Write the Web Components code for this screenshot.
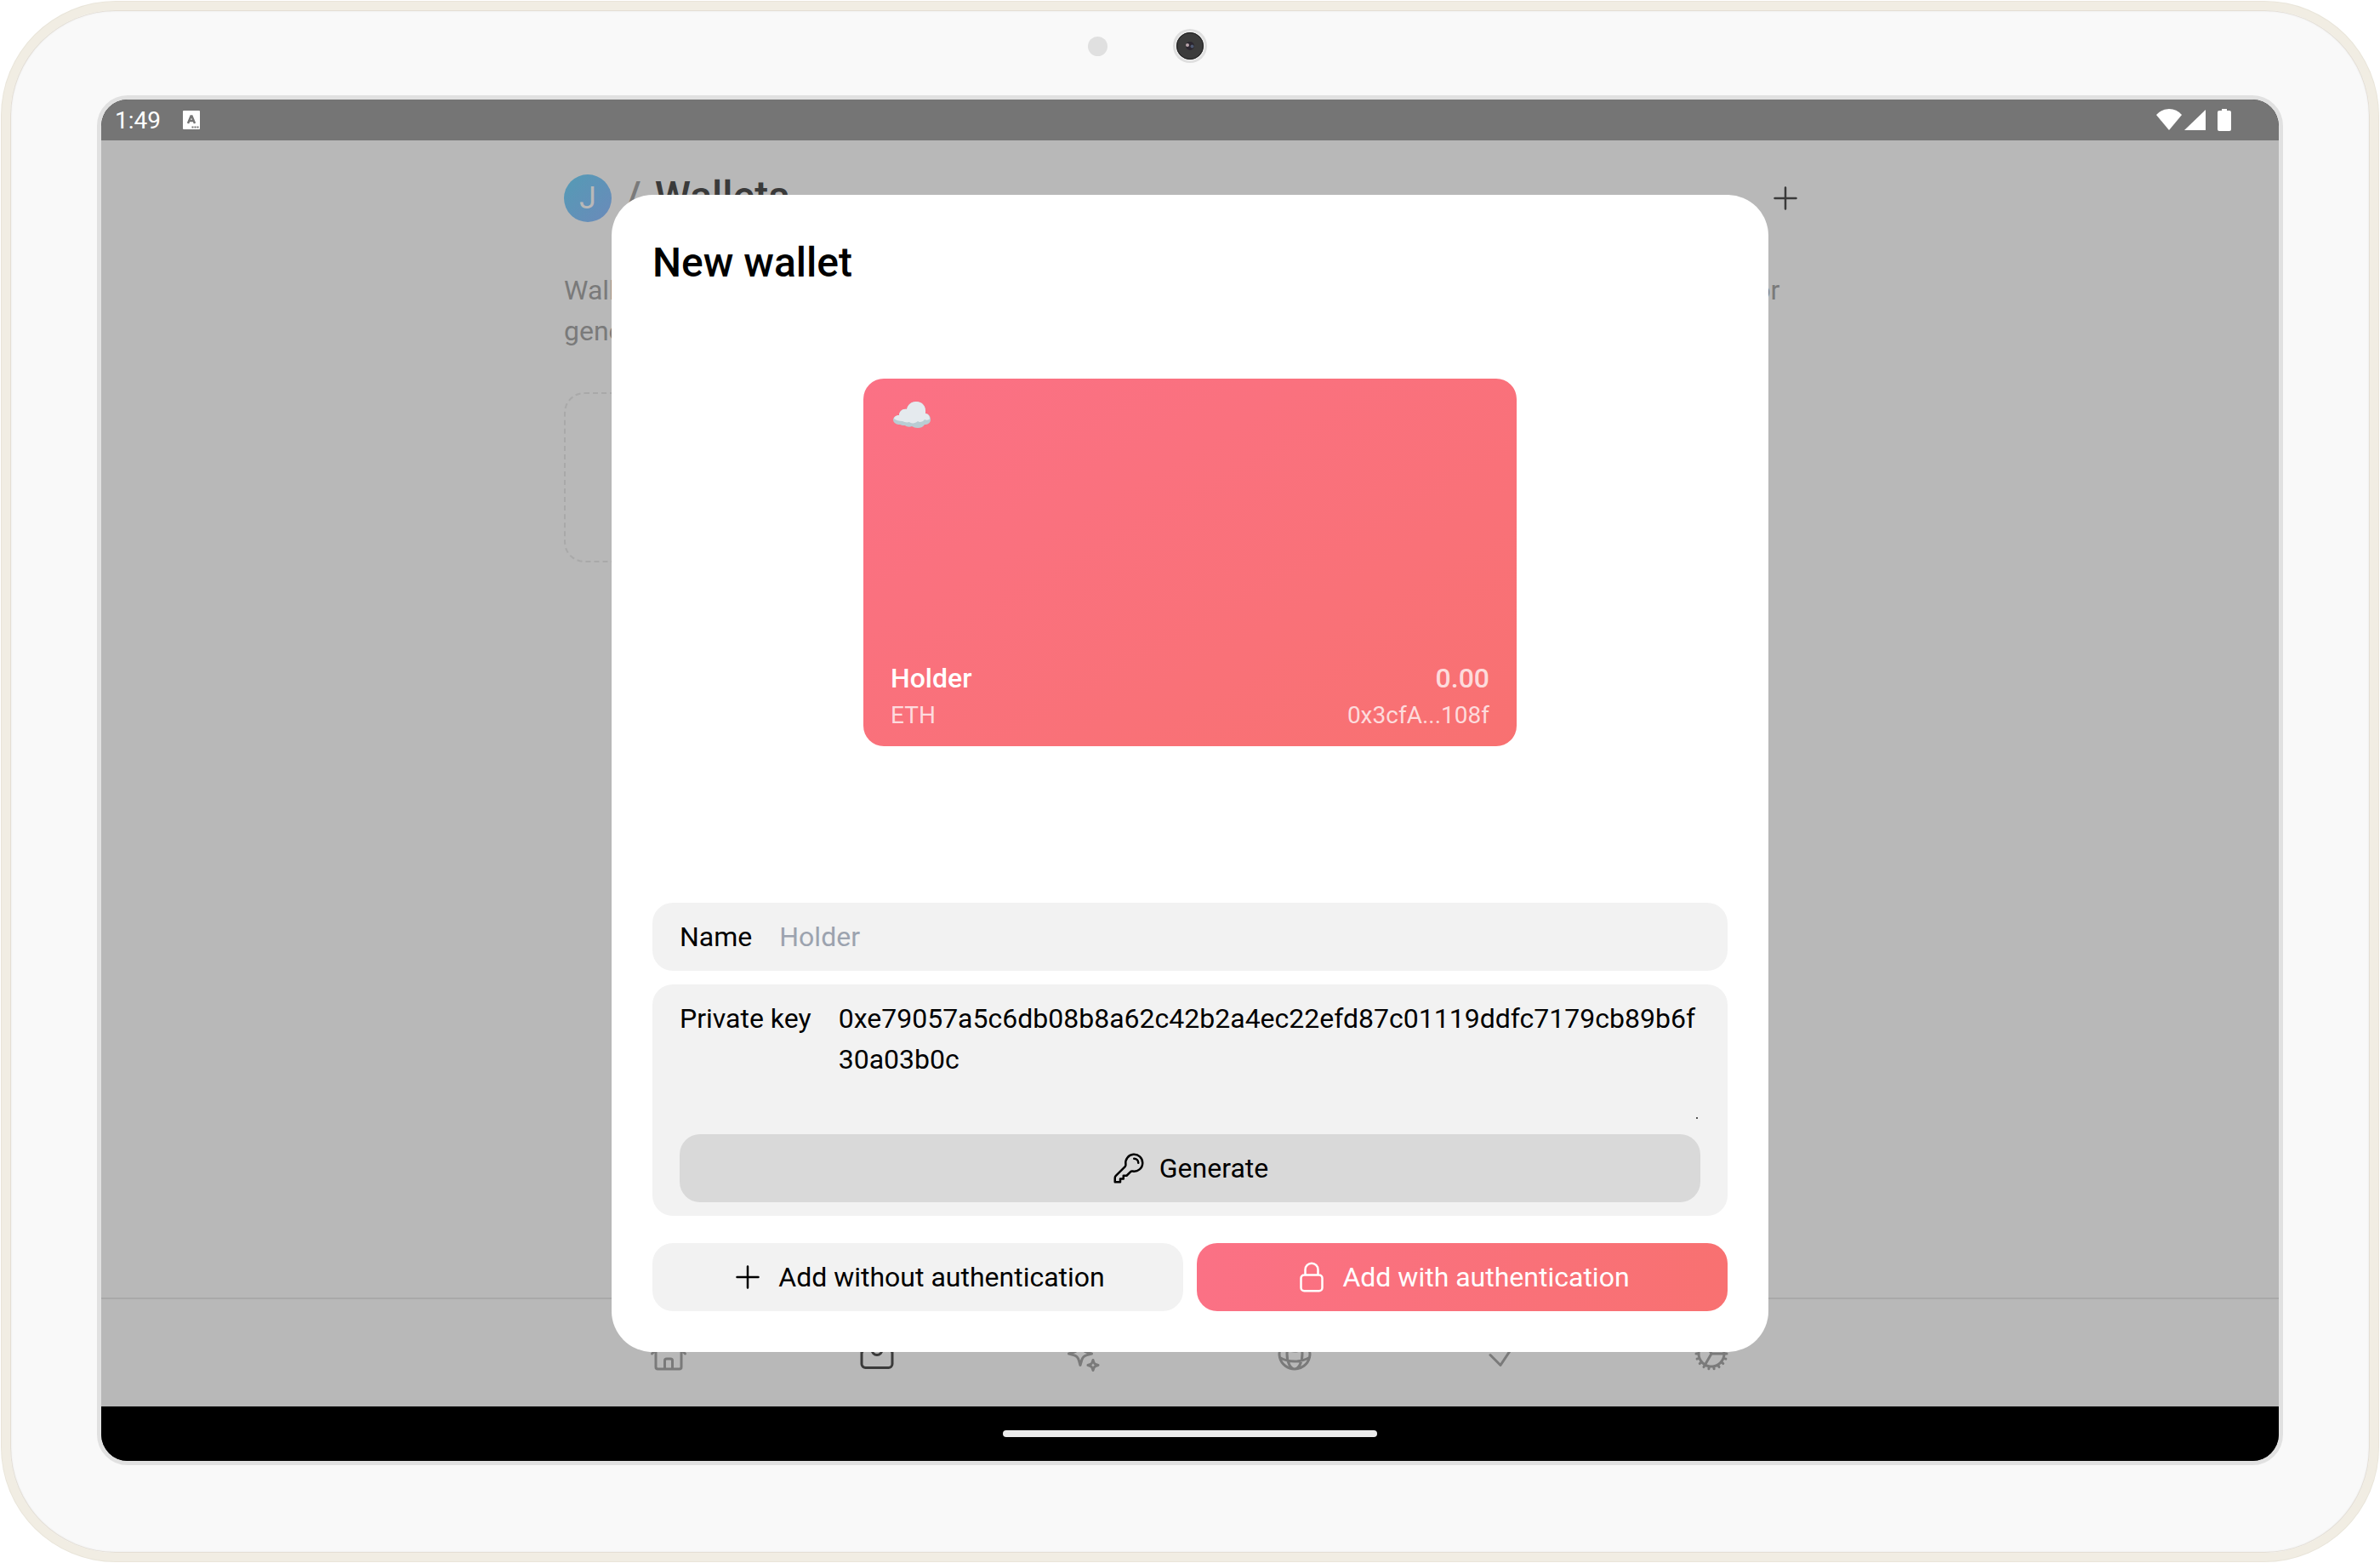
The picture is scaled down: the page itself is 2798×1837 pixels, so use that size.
<!DOCTYPE html>
<html lang="en">
<head>
<meta charset="utf-8">
<title>Wallets</title>
<style>
  html, body { margin: 0; background: #fff; }
  body { font-family: Roboto, "Liberation Sans", sans-serif; font-size: 32px; line-height: 48px; color: #000; }
</style>
</head>
<body>
<tablet-frame>
  <status-bar></status-bar>
  <app-view>
    <wallets-page></wallets-page>
    <nav-bar></nav-bar>
    <modal-sheet slot="overlay" heading="New wallet">
      <wallet-card name="Holder" network="ETH" balance="0.00" address="0x3cfA...108f"></wallet-card>
      <wallet-form slot="footer"></wallet-form>
    </modal-sheet>
  </app-view>
  <gesture-bar></gesture-bar>
</tablet-frame>

<script>
const ICONS = {
  plus: 'M12 4.5v15m7.5-7.5h-15',
  lock: 'M16.5 10.5V6.75a4.5 4.5 0 1 0-9 0v3.75m-.75 11.25h10.5a2.25 2.25 0 0 0 2.25-2.25v-6.75a2.25 2.25 0 0 0-2.25-2.25H6.75a2.25 2.25 0 0 0-2.25 2.25v6.75a2.25 2.25 0 0 0 2.25 2.25Z',
  key: 'M15.75 5.25a3 3 0 0 1 3 3m3 0a6 6 0 0 1-7.029 5.912c-.563-.097-1.159.026-1.563.43L10.5 17.25H8.25v2.25H6v2.25H2.25v-2.818c0-.597.237-1.17.659-1.591l6.499-6.499c.404-.404.527-1 .43-1.563A6 6 0 1 1 21.75 8.25Z',
  home: 'm2.25 12 8.954-8.955c.44-.439 1.152-.439 1.591 0L21.75 12M4.5 9.75v10.125c0 .621.504 1.125 1.125 1.125H9.75v-4.875c0-.621.504-1.125 1.125-1.125h2.25c.621 0 1.125.504 1.125 1.125V21h4.125c.621 0 1.125-.504 1.125-1.125V9.75M8.25 21h8.25',
  wallet: 'M21 12a2.25 2.25 0 0 0-2.25-2.25H15a3 3 0 1 1-6 0H5.25A2.25 2.25 0 0 0 3 12m18 0v6a2.25 2.25 0 0 1-2.25 2.25H5.25A2.25 2.25 0 0 1 3 18v-6m18 0V9M3 12V9m18 0a2.25 2.25 0 0 0-2.25-2.25H5.25A2.25 2.25 0 0 0 3 9m18 0V6a2.25 2.25 0 0 0-2.25-2.25H5.25A2.25 2.25 0 0 0 3 6v3',
  sparkles: 'M9.813 15.904 9 18.75l-.813-2.846a4.5 4.5 0 0 0-3.09-3.09L2.25 12l2.846-.813a4.5 4.5 0 0 0 3.09-3.09L9 5.25l.813 2.846a4.5 4.5 0 0 0 3.09 3.09L15.75 12l-2.846.813a4.5 4.5 0 0 0-3.09 3.09ZM18.259 8.715 18 9.75l-.259-1.035a3.375 3.375 0 0 0-2.455-2.456L14.25 6l1.036-.259a3.375 3.375 0 0 0 2.455-2.456L18 2.25l.259 1.035a3.375 3.375 0 0 0 2.456 2.456L21.75 6l-1.035.259a3.375 3.375 0 0 0-2.456 2.456ZM16.894 20.567 16.5 21.75l-.394-1.183a2.25 2.25 0 0 0-1.423-1.423L13.5 18.75l1.183-.394a2.25 2.25 0 0 0 1.423-1.423l.394-1.183.394 1.183a2.25 2.25 0 0 0 1.423 1.423l1.183.394-1.183.394a2.25 2.25 0 0 0-1.423 1.423Z',
  globe: 'M12 21a9.004 9.004 0 0 0 8.716-6.747M12 21a9.004 9.004 0 0 1-8.716-6.747M12 21c2.485 0 4.5-4.03 4.5-9S14.485 3 12 3m0 18c-2.485 0-4.5-4.03-4.5-9S9.515 3 12 3m0 0a8.997 8.997 0 0 1 7.843 4.582M12 3a8.997 8.997 0 0 0-7.843 4.582m15.686 0A11.953 11.953 0 0 1 12 10.5c-2.998 0-5.74-1.1-7.843-2.918m15.686 0A8.959 8.959 0 0 1 21 12c0 .778-.099 1.533-.284 2.253m0 0A17.919 17.919 0 0 1 12 16.5c-3.162 0-6.133-.815-8.716-2.247m0 0A9.015 9.015 0 0 1 3 12c0-1.605.42-3.113 1.157-4.418',
  check: 'm4.5 12.75 6 6 9-13.5',
  cog: 'M4.5 12a7.5 7.5 0 0 0 15 0m-15 0a7.5 7.5 0 1 1 15 0m-15 0H3m16.5 0H21m-1.5 0H12m-8.457 3.077 1.41-.513m14.095-5.13 1.41-.513M5.106 17.785l1.15-.964m11.49-9.642 1.149-.964M7.501 19.795l.75-1.3m7.5-12.99.75-1.3m-6.063 16.658.26-1.477m2.605-14.772.26-1.477m0 17.726-.26-1.477M10.698 4.614l-.26-1.477M16.5 19.794l-.75-1.299M7.5 4.205 12 12m6.894 5.785-1.149-.964M6.256 7.178l-1.15-.964m15.352 8.864-1.41-.513M4.954 9.435l-1.41-.514M12.002 12l-3.75 6.495'
};

function define(tag, render) {
  customElements.define(tag, class extends HTMLElement {
    constructor() {
      super();
      this.attachShadow({ mode: 'open' });
    }
    connectedCallback() {
      this.shadowRoot.innerHTML = render(this);
    }
  });
}

define('ui-icon', el => `
  <style>
    :host { display: block; flex: none; width: var(--icon-size, 40px); height: var(--icon-size, 40px); }
    svg { display: block; width: 100%; height: 100%; }
  </style>
  <svg viewBox="0 0 24 24" fill="none" stroke="currentColor" stroke-width="1.5" stroke-linecap="round" stroke-linejoin="round" aria-hidden="true"><path d="${ICONS[el.getAttribute('name')]}"/></svg>`);

define('ui-button', el => `
  <style>
    :host { display: block; flex: 1; }
    button {
      display: flex; align-items: center; justify-content: center; gap: 16px;
      width: 100%; margin: 0; padding: 16px 32px; border: 0; border-radius: 24px;
      background: #f2f2f2; color: #000; font: inherit; cursor: pointer;
    }
    :host([variant="muted"]) button { background: #d9d9d9; }
    :host([variant="primary"]) button { background: linear-gradient(to right, #fb7185, #f87171); color: #fff; }
  </style>
  <button type="button"><ui-icon name="${el.getAttribute('icon')}"></ui-icon><span><slot></slot></span></button>`);

define('tablet-frame', () => `
  <style>
    :host {
      display: flex; flex-direction: column; box-sizing: border-box; min-height: calc(100vh - 4px);
      margin: 2px; padding: 0 102px 103px; border: 10px solid #f1ede3; border-radius: 134px;
      background: #f9f9f9;
      box-shadow: inset 0 0 0 1px #e5dfd5, inset 0 0 2px 1px #e4e4e4, 0 0 0 1px #e9e5da;
    }
    .bezel { display: grid; grid-template-columns: 1fr auto 1fr; column-gap: 77px; align-items: center; padding: 22px 0 38px; }
    .sensor { justify-self: end; width: 23px; height: 23px; border-radius: 50%; background: #e0e0e0; }
    .camera { display: block; width: 40px; height: 40px; }
    .screen {
      flex: 1; display: flex; flex-direction: column; overflow: hidden;
      border: 5px solid #e1e1e1; border-radius: 36px; background: #000; background-clip: padding-box;
    }
  </style>
  <div class="bezel">
    <span class="sensor"></span>
    <svg class="camera" viewBox="0 0 40 40" aria-hidden="true">
      <circle cx="20" cy="20" r="20" fill="#dfdfdf"/><circle cx="20" cy="20" r="17.5" fill="#ededed"/>
      <circle cx="20" cy="20" r="16" fill="#3c3c3c"/><circle cx="20" cy="20" r="15.5" fill="none" stroke="#222"/>
      <circle cx="20" cy="20" r="5" fill="#2c2730"/><circle cx="17" cy="19" r="2" fill="#b9a5ab"/><circle cx="22.500" cy="20.500" r="2" fill="#4d5870"/>
    </svg>
  </div>
  <div class="screen"><slot></slot></div>`);

define('status-bar', () => `
  <style>
    :host { display: flex; align-items: center; justify-content: space-between; height: 48px; padding: 0 56px 0 16px; background: #757575; color: #fff; font-size: 28px; line-height: 44px; }
    .group { display: flex; align-items: center; gap: 26px; }
    .time { padding-top: 2px; }
    svg { display: block; }
  </style>
  <div class="group">
    <span class="time">1:49</span>
    <svg width="20" height="22" viewBox="0 0 20 22" aria-hidden="true">
      <rect width="20" height="22" rx="1" fill="#fff"/>
      <path d="M6 15 9.500 6.500h1L14 15M7.500 12h5" fill="none" stroke="#757575" stroke-width="2.500"/>
      <path d="M10.500 19.500h2m1 0h2m1 0h2" stroke="#757575" stroke-width="2"/>
    </svg>
  </div>
  <svg width="88" height="26" viewBox="0 0 88 26" fill="#fff" aria-hidden="true">
    <path d="M0 7Q6 0 15 0T30 7L15 25Z"/>
    <path d="M58 1v24H33Z"/>
    <path d="M77 0h6v2h3q2 0 2 2v20q0 2-2 2H74q-2 0-2-2V4q0-2 2-2h3Z"/>
  </svg>`);

define('gesture-bar', () => `
  <style>
    :host { display: flex; align-items: center; justify-content: center; height: 64px; background: #000; }
    span { width: 440px; height: 8px; border-radius: 4px; background: #ececec; }
  </style>
  <span></span>`);

define('app-view', () => `
  <style>
    :host { position: relative; flex: 1; display: flex; flex-direction: column; background: #b8b8b8; }
    .overlay { position: absolute; inset: 0; display: flex; align-items: center; justify-content: center; }
  </style>
  <slot></slot>
  <div class="overlay"><slot name="overlay"></slot></div>`);

define('wallets-page', () => `
  <style>
    :host { flex: 1; display: block; box-sizing: border-box; width: 100%; max-width: 1536px; margin: 0 auto; padding: 0 32px; color: #7a7a7a; }
    header { display: flex; align-items: center; gap: 16px; height: 136px; }
    .avatar { display: flex; align-items: center; justify-content: center; width: 56px; height: 56px; border-radius: 50%; background: linear-gradient(135deg, #549bb5, #6b8aba); color: #b8b8b8; font-size: 36px; }
    h1, .slash { margin: 0; padding-bottom: 4px; font-size: 48px; line-height: 64px; font-weight: 500; }
    h1 { flex: 1; color: #3a3a3a; }
    button { padding: 16px; border: 0; background: none; color: #3a3a3a; cursor: pointer; }
    p { margin: 16px 0 48px; }
    .cards { display: grid; grid-template-columns: repeat(4, 1fr); gap: 16px; }
    .empty { box-sizing: border-box; height: 200px; border: 2px dashed #a9a9a9; border-radius: 24px; }
  </style>
  <header>
    <span class="avatar">J</span><span class="slash">/</span><h1>Wallets</h1>
    <button type="button" aria-label="Add wallet"><ui-icon name="plus"></ui-icon></button>
  </header>
  <p>Wallets hold your funds and sign transactions securely. You can add one by entering its private key or generate a new one.</p>
  <div class="cards"><div class="empty"></div></div>`);

define('nav-bar', () => `
  <style>
    :host { display: block; border-top: 2px solid #a9a9a9; }
    nav { display: flex; box-sizing: border-box; max-width: 1536px; height: 126px; margin: 0 auto; padding: 2px 32px 0; }
    a { flex: 1; display: flex; align-items: center; justify-content: center; color: #7a7a7a; --icon-size: 48px; }
    a[aria-current] { color: #3a3a3a; }
  </style>
  <nav>${[['home', 'Home'], ['wallet', 'Wallets'], ['sparkles', 'Plugins'], ['globe', 'Sessions'], ['check', 'Requests'], ['cog', 'Settings']]
    .map(([icon, label]) => `<a href="#${icon}" aria-label="${label}"${icon === 'wallet' ? ' aria-current="page"' : ''}><ui-icon name="${icon}"></ui-icon></a>`).join('')}</nav>`);

define('modal-sheet', el => `
  <style>
    :host { display: block; width: 100%; max-width: 1360px; }
    section { display: flex; flex-direction: column; box-sizing: border-box; padding: 48px; border-radius: 48px; background: #fff; }
    h2 { margin: 0; font-size: 48px; line-height: 64px; font-weight: 500; }
    .stage { display: flex; justify-content: center; padding: 104px 0 184px; }
  </style>
  <section role="dialog" aria-labelledby="title">
    <h2 id="title">${el.getAttribute('heading')}</h2>
    <div class="stage"><slot></slot></div>
    <slot name="footer"></slot>
  </section>`);

define('wallet-card', el => `
  <style>
    :host {
      display: flex; flex-direction: column; justify-content: space-between; box-sizing: border-box;
      width: 100%; max-width: 768px; aspect-ratio: 16 / 9; padding: 24px 32px 16px; border-radius: 24px;
      background: linear-gradient(to bottom right, #fb7185, #f87171); color: #fff;
    }
    svg { display: block; width: 48px; height: 38px; }
    .row { display: flex; justify-content: space-between; }
    .main { font-weight: 500; }
    .sub { font-size: 28px; line-height: 40px; }
    .dim { color: #ffffffc0; }
  </style>
  <svg viewBox="0 0 48 38" aria-hidden="true">
    <path d="M3 24c0-2 3-5 7-5 0-4 4-8 9-7 1-5 5-9 11-9 7 0 12 5 11 14 4 0 6 4 6 7 0 4-3 6-7 6-2 3-5 4-8 4-3 0-5-1-7-2-2 1-6 1-8-1-2 0-4 0-6-1-4 0-8-2-8-6Z" fill="#b9ccd3"/>
    <path d="M4 23c0-2 3-4 6-4 0-4 4-8 9-7 1-5 5-9 11-9 7 0 12 5 11 14 3 0 5 3 5 6-1 2-4 2-6 1-2 3-6 4-8 2-3 3-8 3-10 1-3 1-6 0-8-1-4 0-8-1-10-3Z" fill="#e5eaee"/>
  </svg>
  <div>
    <div class="row main"><span>${el.getAttribute('name')}</span><span class="dim">${el.getAttribute('balance')}</span></div>
    <div class="row sub dim"><span>${el.getAttribute('network')}</span><span>${el.getAttribute('address')}</span></div>
  </div>`);

define('wallet-form', () => `
  <style>
    :host { display: block; }
    form { display: flex; flex-direction: column; gap: 16px; }
    .field { display: flex; flex-direction: column; gap: 16px; padding: 16px 32px; border-radius: 24px; background: #f2f2f2; }
    .line { display: flex; align-items: flex-start; gap: 32px; }
    label { flex: none; }
    input, textarea { display: block; box-sizing: border-box; width: 100%; margin: 0; padding: 0; border: 0; outline: 0; background: none; color: #000; font: inherit; }
    input { flex: 1; height: 48px; }
    input::placeholder { color: #9ca3af; opacity: 1; }
    .area { position: relative; flex: 1; min-width: 0; }
    textarea { height: 144px; resize: none; overflow: hidden; word-break: break-all; }
    .grip { position: absolute; right: 2px; bottom: 2px; width: 3px; height: 3px; }
    .actions { display: flex; gap: 16px; padding-top: 16px; }
  </style>
  <form>
    <div class="field"><div class="line"><label for="name">Name</label><input id="name" type="text" placeholder="Holder"></div></div>
    <div class="field">
      <div class="line">
        <label for="key">Private key</label>
        <div class="area">
          <textarea id="key" spellcheck="false">0xe79057a5c6db08b8a62c42b2a4ec22efd87c01119ddfc7179cb89b6f30a03b0c</textarea>
          <svg class="grip" viewBox="0 0 3 3" aria-hidden="true"><path d="M0 1h2v2H0Z" fill="#555"/></svg>
        </div>
      </div>
      <ui-button variant="muted" icon="key">Generate</ui-button>
    </div>
    <div class="actions">
      <ui-button icon="plus">Add without authentication</ui-button>
      <ui-button variant="primary" icon="lock">Add with authentication</ui-button>
    </div>
  </form>`);
</script>
</body>
</html>
